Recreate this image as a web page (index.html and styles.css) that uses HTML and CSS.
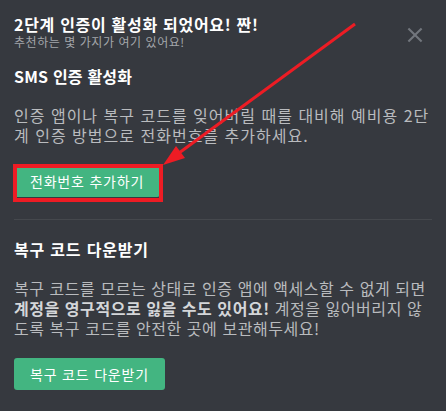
FILE: index.html
```html
<!DOCTYPE html>
<html lang="ko">
<head>
    <meta charset="UTF-8">
    <meta name="viewport" content="width=device-width, initial-scale=1.0">
    <title>2단계 인증</title>
    <link rel="stylesheet" href="styles.css">
</head>
<body>
    <div class="modal">
        <div class="header">
            <div class="header-text">
                <h1>2단계 인증이 활성화 되었어요! 짠!</h1>
                <p class="subtitle">추천하는 몇 가지가 여기 있어요!</p>
            </div>
            <button class="close-btn" aria-label="닫기">
                <svg width="22" height="22" viewBox="0 0 24 24">
                    <path fill="currentColor" d="M18.4 4L12 10.4L5.6 4L4 5.6L10.4 12L4 18.4L5.6 20L12 13.6L18.4 20L20 18.4L13.6 12L20 5.6L18.4 4Z"/>
                </svg>
            </button>
        </div>

        <div class="section">
            <h2>SMS 인증 활성화</h2>
            <p class="desc">인증 앱이나 복구 코드를 잊어버릴 때를 대비해 예비용 2단계 인증 방법으로 전화번호를 추가하세요.</p>
            <button class="green-btn">전화번호 추가하기</button>
        </div>

        <div class="divider"></div>

        <div class="section">
            <h2 class="wide">복구 코드 다운받기</h2>
            <p class="desc tight">복구 코드를 모르는 상태로 인증 앱에 액세스할 수 없게 되면 <strong>계정을 영구적으로 잃을 수도 있어요!</strong> 계정을 잃어버리지 않도록 복구 코드를 안전한 곳에 보관해두세요!</p>
            <button class="green-btn">복구 코드 다운받기</button>
        </div>
    </div>

    <!-- 스크린샷 위에 그려진 주석 (빨간 화살표와 박스) -->
    <svg class="annotation" width="446" height="411" viewBox="0 0 446 411">
        <rect x="15" y="166" width="146" height="34" fill="none" stroke="#ed1c24" stroke-width="4"/>
        <line x1="355" y1="24" x2="179" y2="153" stroke="#ed1c24" stroke-width="3"/>
        <polygon points="163,165 185,158 176,146" fill="#ed1c24"/>
    </svg>
</body>
</html>
```

FILE: styles.css
```css
* {
    margin: 0;
    padding: 0;
    box-sizing: border-box;
}

body {
    background-color: #36393f;
    font-family: 'Noto Sans CJK KR', 'Noto Sans', sans-serif;
    color: #b9bbbe;
    position: relative;
    min-height: 411px;
}

.modal {
    padding: 14px 14px 0 14px;
}

.header {
    display: flex;
    justify-content: space-between;
    align-items: flex-start;
}

h1 {
    font-size: 16px;
    line-height: 20px;
    font-weight: 700;
    letter-spacing: 0.7px;
    color: #ffffff;
}

.subtitle {
    font-size: 12px;
    line-height: 16px;
    letter-spacing: 0.55px;
    color: #a3a6aa;
}

.close-btn {
    background: none;
    border: none;
    color: #72767d;
    margin-top: 10px;
    margin-right: 6px;
    width: 22px;
    height: 22px;
    display: flex;
    cursor: pointer;
}

.section {
    padding-top: 16px;
}

h2 {
    font-size: 16px;
    line-height: 20px;
    font-weight: 700;
    letter-spacing: 0.2px;
    color: #ffffff;
    margin-bottom: 19px;
}

h2.wide {
    letter-spacing: 0.8px;
}

.desc {
    font-size: 16px;
    line-height: 20px;
    letter-spacing: 1px;
    color: #b9bbbe;
    margin-bottom: 20px;
}

.desc.tight {
    letter-spacing: 0.55px;
}

.desc strong {
    font-weight: 700;
    color: #d4d6d9;
}

.green-btn {
    height: 32px;
    padding: 2px 16px;
    background-color: #43b581;
    color: #ffffff;
    border: none;
    border-radius: 3px;
    font-family: inherit;
    font-size: 14px;
    letter-spacing: 0.8px;
    cursor: pointer;
}

.divider {
    height: 1px;
    background-color: #45484d;
    margin-top: 22px;
    margin-bottom: 3px;
}

.annotation {
    position: absolute;
    top: 0;
    left: 0;
    pointer-events: none;
}
```
